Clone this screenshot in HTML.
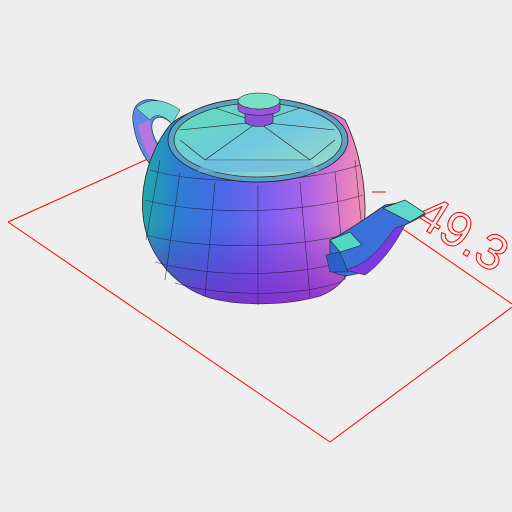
<!DOCTYPE html>
<html><head><style>html,body{margin:0;padding:0;background:#eeeeee;}svg{display:block}</style></head>
<body>
<svg width="512" height="512" viewBox="0 0 512 512" xmlns="http://www.w3.org/2000/svg">
<defs>
<linearGradient id="bd" x1="0" x2="1" y1="0" y2="0">
<stop offset="0" stop-color="#22a8a8"/><stop offset="0.15" stop-color="#2a80d0"/>
<stop offset="0.35" stop-color="#4a6ae8"/><stop offset="0.55" stop-color="#7a5ff0"/>
<stop offset="0.75" stop-color="#b064e4"/><stop offset="0.9" stop-color="#e07cc8"/><stop offset="1" stop-color="#f090b0"/>
</linearGradient>
<linearGradient id="sh" x1="0" x2="0" y1="0" y2="1">
<stop offset="0.6" stop-color="#6020c0" stop-opacity="0"/><stop offset="1" stop-color="#8020c0" stop-opacity="0.7"/>
</linearGradient>
<linearGradient id="ld" x1="0" x2="1" y1="0" y2="1">
<stop offset="0" stop-color="#60e0b0"/><stop offset="0.5" stop-color="#70c8e0"/><stop offset="1" stop-color="#a0e0c0"/>
</linearGradient>
</defs>
<g stroke="#ff0000" stroke-width="1" fill="none">
<line x1="8" y1="222" x2="150" y2="158"/>
<line x1="8" y1="222" x2="330" y2="442"/>
<line x1="330" y1="442" x2="512" y2="307"/>
<line x1="400" y1="227" x2="512" y2="304"/>
<line x1="372" y1="192" x2="386" y2="192"/>
<text x="0" y="0" transform="translate(412,222) rotate(32)" font-family="Liberation Sans, sans-serif" font-size="50" stroke="#ff0000" fill="none" stroke-width="1">49.3</text>
</g>
<!-- handle -->
<path d="M176 110 C152 92 130 98 133 122 C136 145 146 160 153 168 L163 150 C153 140 150 128 153 121 C158 114 166 118 172 124 Z" fill="#5a8ae8" stroke="#222" stroke-width="0.6"/>
<path d="M136 108 C150 96 166 100 180 110 L172 124 C165 116 156 112 150 120 Z" fill="#70d8d0" stroke="#222" stroke-width="0.5"/>
<path d="M138 125 C141 142 148 156 154 165 L160 150 C152 140 150 130 150 120 Z" fill="#d070d8" opacity="0.8"/>
<!-- body -->
<path d="M170 125 C150 150 140 185 143 215 C146 250 170 285 210 298 C240 306 285 306 320 296 C350 285 366 250 365 205 C364 170 355 140 345 120 C310 95 200 95 170 125 Z" fill="url(#bd)" stroke="#222" stroke-width="0.8"/>
<path d="M170 125 C150 150 140 185 143 215 C146 250 170 285 210 298 C240 306 285 306 320 296 C350 285 366 250 365 205 C364 170 355 140 345 120 C310 95 200 95 170 125 Z" fill="url(#sh)"/>
<g stroke="#1a1a3a" stroke-width="0.6" fill="none" opacity="0.8">
<path d="M145 200 C200 215 300 215 363 195"/>
<path d="M146 235 C200 250 300 250 362 230"/>
<path d="M155 262 C210 278 300 278 355 258"/>
<path d="M175 283 C220 297 300 297 340 282"/>
<path d="M150 170 C200 185 300 185 360 165"/>
<path d="M258 185 L258 305"/><path d="M215 182 L205 296"/><path d="M300 182 L310 297"/>
<path d="M180 172 L165 280"/><path d="M335 172 L345 280"/><path d="M160 160 L146 240"/><path d="M355 160 L363 240"/>
</g>
<!-- rim and lid -->
<ellipse cx="258" cy="140" rx="90" ry="42" fill="#5aa0c0" stroke="#222" stroke-width="0.8"/>
<ellipse cx="258" cy="140" rx="84" ry="37" fill="url(#ld)" stroke="#333" stroke-width="0.8"/>
<g stroke="#222" stroke-width="0.6" fill="none">
<path d="M258 122 L205 160 L310 160 Z"/><path d="M258 122 L180 130"/><path d="M258 122 L335 130"/>
<path d="M258 122 L215 108"/><path d="M258 122 L300 108"/><path d="M180 140 L205 160"/><path d="M335 140 L310 160"/>
</g>
<path d="M205 160 L310 160 L320 172 L198 172 Z" fill="#6ab8e0" opacity="0.6"/>
<!-- knob -->
<path d="M245 108 L245 122 C250 128 268 128 273 122 L273 108 Z" fill="#8a50d8" stroke="#222" stroke-width="0.6"/>
<path d="M238 102 L238 110 C243 117 275 117 280 110 L280 102" fill="#a050e0" stroke="#222" stroke-width="0.6"/>
<ellipse cx="259" cy="101" rx="21" ry="8" fill="#78e0c8" stroke="#222" stroke-width="0.6"/>
<!-- spout -->
<path d="M330 240 C350 230 370 215 385 205 L405 202 L425 215 L405 225 C395 235 385 255 370 268 C355 277 340 278 330 270 Z" fill="#3a70d8" stroke="#222" stroke-width="0.7"/>
<path d="M345 270 C365 265 380 250 395 228 L405 225 C395 245 380 265 365 275 Z" fill="#7a3ae0" stroke="#222" stroke-width="0.5"/>
<path d="M383 208 L405 200 L425 213 L410 222 Z" fill="#60d8c8" stroke="#222" stroke-width="0.7"/>
<path d="M330 240 L350 232 L362 245 L340 252 Z" fill="#50d8c0" stroke="#222" stroke-width="0.6"/>
<path d="M326 255 L340 252 L348 272 L330 272 Z" fill="#2a60c8" stroke="#222" stroke-width="0.5"/>
</svg>
</body></html>
